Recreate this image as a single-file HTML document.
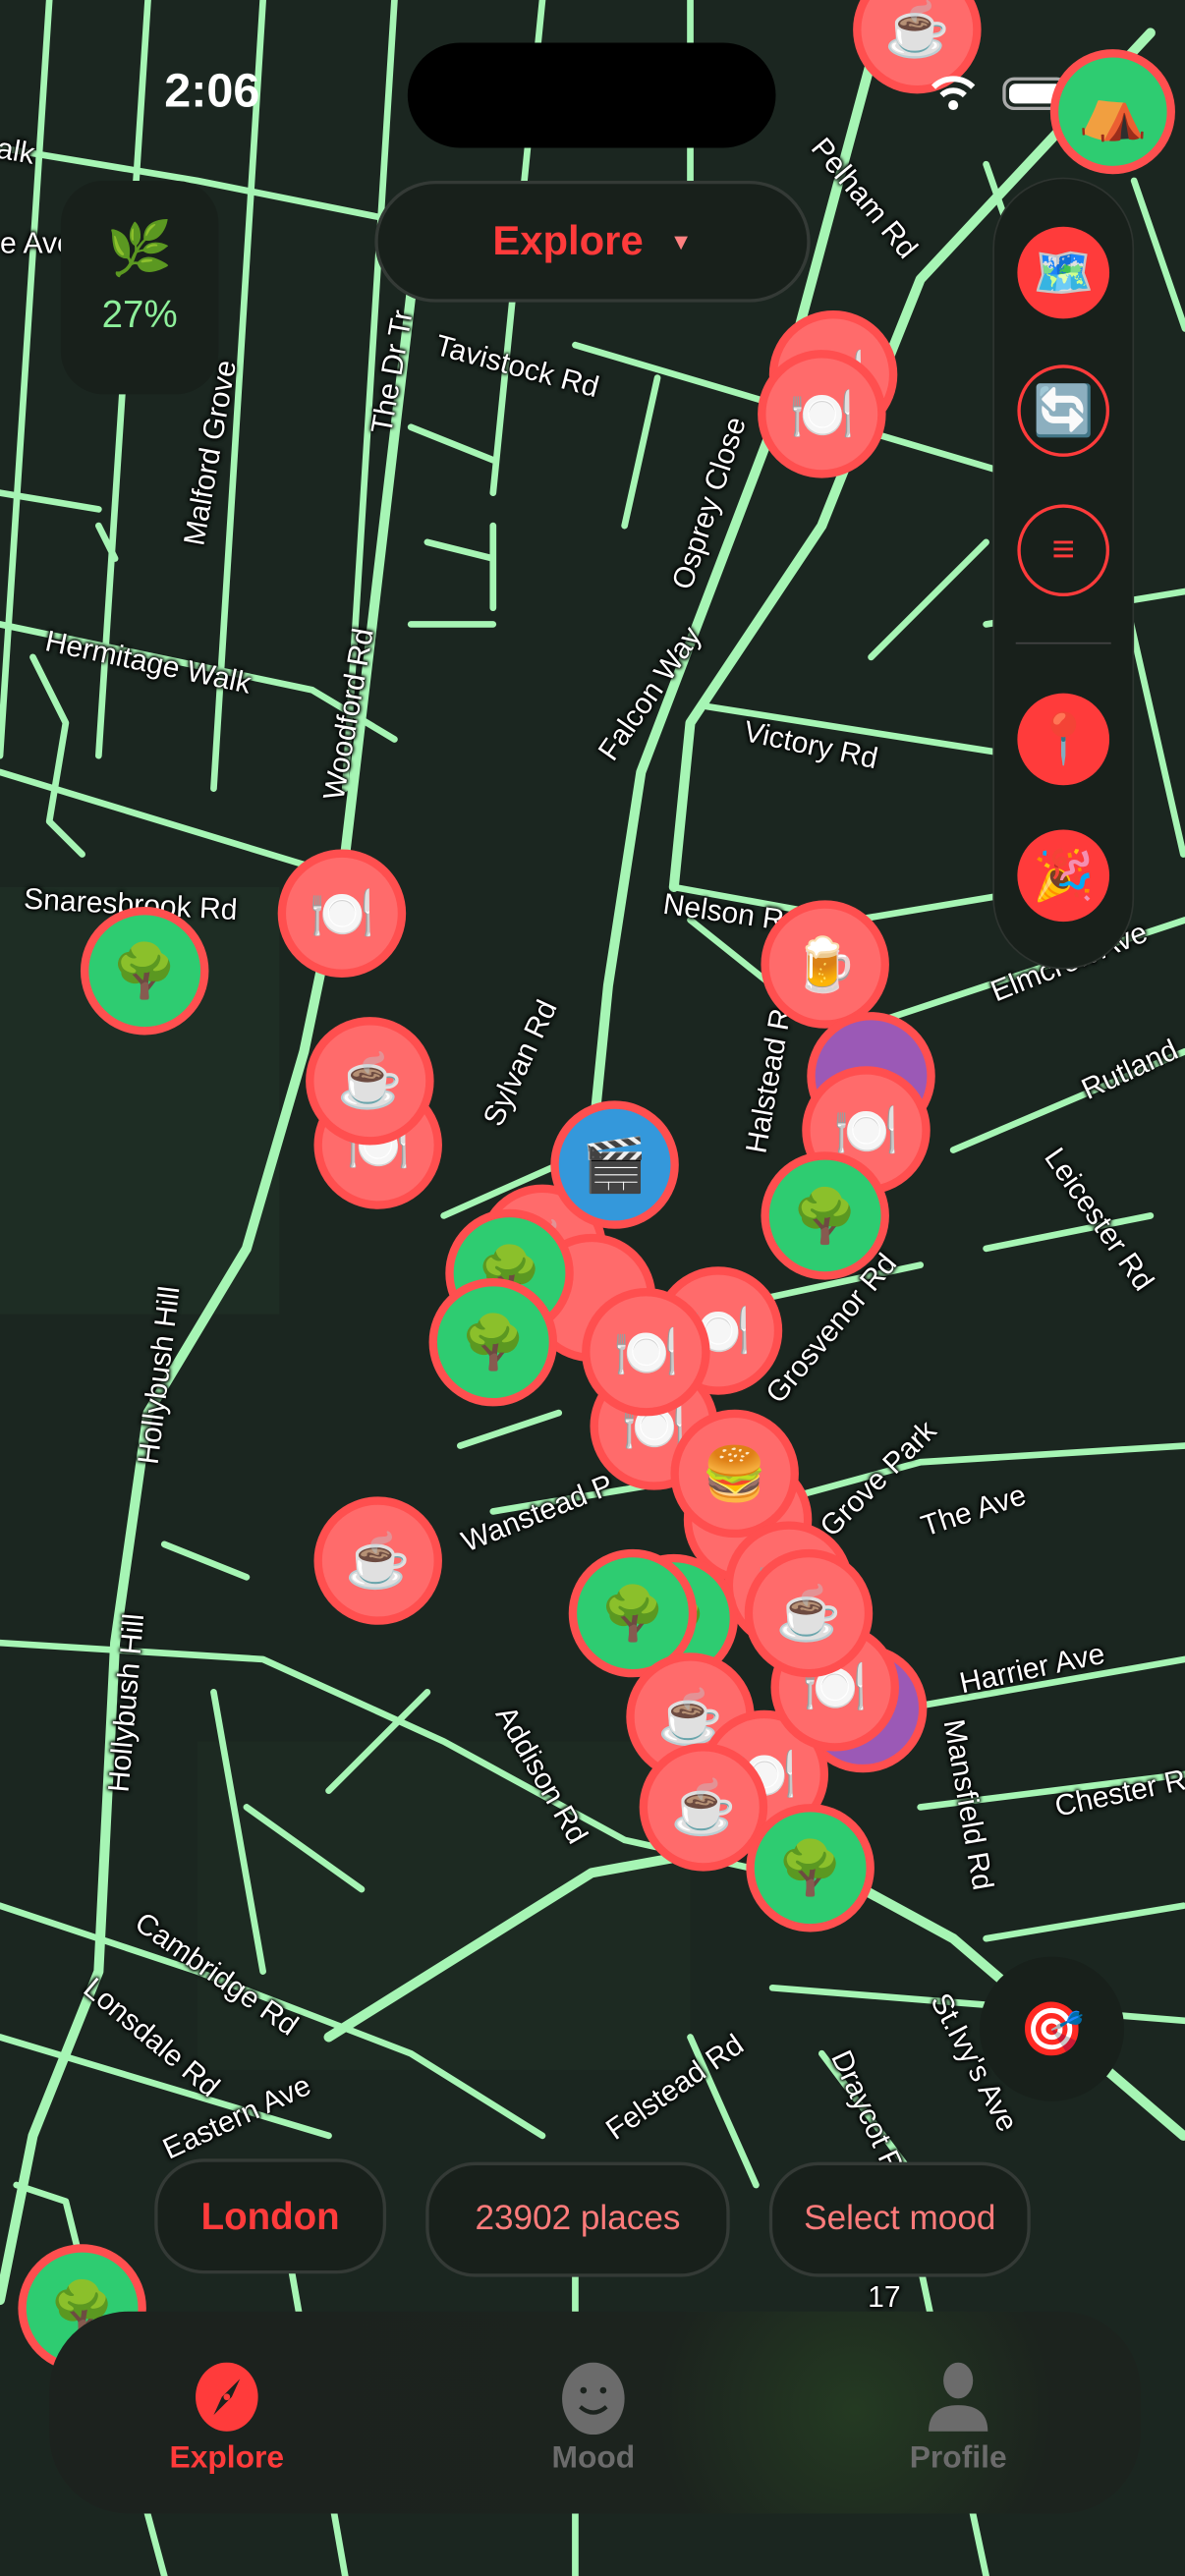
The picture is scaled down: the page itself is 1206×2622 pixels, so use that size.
<!DOCTYPE html>
<html><head><meta charset="utf-8"><style>
html,body{margin:0;padding:0;background:#1b2620;overflow:hidden}
#root{position:absolute;left:0;top:0;width:721px;height:1568px;transform:scale(1.67268,1.67219);transform-origin:0 0;background:#1b2620;font-family:"Liberation Sans","Noto Sans CJK JP",sans-serif;overflow:hidden}
.m{position:absolute;width:68px;height:68px;border-radius:50%;background:#ff6b6b;border:5px solid #ff4f4f;display:flex;align-items:center;justify-content:center;font-size:32px;transform:translate(-39px,-39px);box-sizing:content-box}
.g{background:#2ecc71}.p{background:#9b59b6}.b{background:#3498db}
.lbl{position:absolute;color:#fff;font-size:18px;white-space:nowrap;text-shadow:0 0 3px #000,0 0 3px #000,0 0 2px #000,0 0 2px #000;transform-origin:0 0}
.chip{position:absolute;height:70px;border-radius:30px;background:#18201b;border:2px solid #343a36;display:flex;align-items:center;justify-content:center;font-size:21px;box-sizing:border-box}
.rb{position:absolute;width:56px;height:56px;border-radius:50%;background:#ff3b3b;display:flex;align-items:center;justify-content:center;font-size:30px;left:619px}
</style></head><body><div id="root">
<svg width="721" height="1568" style="position:absolute;left:0;top:0" fill="none" stroke="#a6f5b4" stroke-width="4" stroke-linecap="round" stroke-linejoin="round">
<rect x="0" y="540" width="170" height="260" fill="#1e2d24" stroke="none"/>
<rect x="120" y="1060" width="300" height="200" fill="#1d2a22" stroke="none"/>
<path d="M0 90 L120 110 L320 150 L480 160"/>
<path d="M30 0 L0 460 M90 0 L60 460 M160 0 L130 480 M240 0 L210 480 M330 0 L300 300 M420 0 L420 120"/>
<path d="M350 210 L620 290 M400 230 L380 320 M250 260 L300 280"/>
<path d="M0 380 L190 420 L240 450 M0 470 L230 540"/>
<path d="M540 0 L470 260 L390 470 L370 600 L360 700" stroke-width="6"/>
<path d="M700 20 L560 170 L500 320 L420 440 L410 540" stroke-width="6"/>
<path d="M250 180 L210 520 L185 640 L150 760 L90 860 L70 1000 L60 1200 L20 1300 L0 1400" stroke-width="6"/>
<path d="M520 560 L640 540 M540 620 L721 560 M580 700 L721 640 M600 380 L721 360 M430 430 L620 460 M410 540 L520 560"/>
<path d="M270 740 L360 700 M420 800 L560 770 M600 760 L700 740"/>
<path d="M0 1000 L160 1010 L270 1060 L380 1120 L470 1140 M300 920 L420 900 M450 920 L560 890 L721 880"/>
<path d="M0 1160 L120 1200 L250 1250 L330 1300 M0 1240 L200 1300 M130 1030 L160 1200 M200 1090 L260 1030 M420 1240 L460 1330 M500 1250 L560 1330"/>
<path d="M200 1240 L360 1140 L470 1120 L580 1180 L720 1300" stroke-width="6"/>
<path d="M550 1040 L721 1010 M560 1100 L721 1080 M600 1180 L720 1160 M470 1210 L721 1230"/>
<path d="M10 1330 L40 1340 L60 1420 L100 1568 M170 1340 L210 1568 M350 1380 L350 1568 M560 1380 L600 1568"/>
<path d="M600 100 L670 300 L720 520 M690 110 L721 200 M530 400 L600 330"/>
<path d="M20 400 L40 440 L30 500 L50 520"/>
<path d="M0 300 L60 310 M60 320 L70 340 M250 380 L300 380 M260 330 L300 340 M300 320 L300 370 M420 560 L470 600 M280 880 L340 860 M100 940 L150 960 M150 1100 L220 1150"/>
</svg>
<div class="lbl" style="left:0;top:80px;transform:rotate(10deg)">alk</div>
<div class="lbl" style="left:0;top:138px">e Ave</div>
<div class="lbl" style="left:108px;top:330px;transform:rotate(-80deg)">Malford Grove</div>
<div class="lbl" style="left:222px;top:262px;transform:rotate(-80deg)">The Dr Tr</div>
<div class="lbl" style="left:268px;top:200px;transform:rotate(15deg)">Tavistock Rd</div>
<div class="lbl" style="left:405px;top:355px;transform:rotate(-72deg)">Osprey Close</div>
<div class="lbl" style="left:30px;top:380px;transform:rotate(12deg)">Hermitage Walk</div>
<div class="lbl" style="left:193px;top:485px;transform:rotate(-80deg)">Woodford Rd</div>
<div class="lbl" style="left:360px;top:455px;transform:rotate(-55deg)">Falcon Way</div>
<div class="lbl" style="left:455px;top:435px;transform:rotate(12deg)">Victory Rd</div>
<div class="lbl" style="left:15px;top:537px;transform:rotate(3deg)">Snaresbrook Rd</div>
<div class="lbl" style="left:405px;top:540px;transform:rotate(8deg)">Nelson R</div>
<div class="lbl" style="left:290px;top:680px;transform:rotate(-65deg)">Sylvan Rd</div>
<div class="lbl" style="left:450px;top:700px;transform:rotate(-80deg)">Halstead R</div>
<div class="lbl" style="left:600px;top:595px;transform:rotate(-22deg)">Elmcroft Ave</div>
<div class="lbl" style="left:655px;top:655px;transform:rotate(-25deg)">Rutland</div>
<div class="lbl" style="left:648px;top:695px;transform:rotate(55deg)">Leicester Rd</div>
<div class="lbl" style="left:462px;top:845px;transform:rotate(-50deg)">Grosvenor Rd</div>
<div class="lbl" style="left:80px;top:890px;transform:rotate(-83deg)">Hollybush Hill</div>
<div class="lbl" style="left:278px;top:930px;transform:rotate(-22deg)">Wanstead P</div>
<div class="lbl" style="left:495px;top:925px;transform:rotate(-45deg)">Grove Park</div>
<div class="lbl" style="left:558px;top:920px;transform:rotate(-18deg)">The Ave</div>
<div class="lbl" style="left:62px;top:1090px;transform:rotate(-85deg)">Hollybush Hill</div>
<div class="lbl" style="left:315px;top:1035px;transform:rotate(60deg)">Addison Rd</div>
<div class="lbl" style="left:582px;top:1015px;transform:rotate(-12deg)">Harrier Ave</div>
<div class="lbl" style="left:640px;top:1090px;transform:rotate(-12deg)">Chester R</div>
<div class="lbl" style="left:590px;top:1045px;transform:rotate(80deg)">Mansfield Rd</div>
<div class="lbl" style="left:90px;top:1160px;transform:rotate(35deg)">Cambridge Rd</div>
<div class="lbl" style="left:60px;top:1200px;transform:rotate(40deg)">Lonsdale Rd</div>
<div class="lbl" style="left:96px;top:1300px;transform:rotate(-25deg)">Eastern Ave</div>
<div class="lbl" style="left:365px;top:1290px;transform:rotate(-35deg)">Felstead Rd</div>
<div class="lbl" style="left:520px;top:1245px;transform:rotate(65deg)">Draycot R</div>
<div class="lbl" style="left:580px;top:1210px;transform:rotate(62deg)">St.Ivy's Ave</div>
<div class="lbl" style="left:528px;top:1388px">17</div>
<div class="lbl" style="left:505px;top:80px;transform:rotate(50deg)">Pelham Rd</div>
<!-- markers -->
<div class="m" style="left:558px;top:18px">☕</div>
<div class="m" style="left:507px;top:228px">🍽️</div>
<div class="m" style="left:500px;top:252px">🍽️</div>
<div class="m g" style="left:88px;top:591px">🌳</div>
<div class="m" style="left:208px;top:556px">🍽️</div>
<div class="m" style="left:230px;top:697px">🍽️</div>
<div class="m" style="left:225px;top:658px">☕</div>
<div class="m" style="left:502px;top:587px">🍺</div>
<div class="m p" style="left:530px;top:655px"></div>
<div class="m" style="left:527px;top:688px">🍽️</div>
<div class="m g" style="left:502px;top:740px">🌳</div>
<div class="m" style="left:330px;top:760px">☕</div>
<div class="m" style="left:360px;top:790px"></div>
<div class="m b" style="left:374px;top:709px">🎬</div>
<div class="m g" style="left:310px;top:775px">🌳</div>
<div class="m g" style="left:300px;top:817px">🌳</div>
<div class="m" style="left:437px;top:810px">🍽️</div>
<div class="m" style="left:398px;top:868px">🍽️</div>
<div class="m" style="left:393px;top:823px">🍽️</div>
<div class="m" style="left:455px;top:925px"></div>
<div class="m" style="left:447px;top:897px">🍔</div>
<div class="m" style="left:230px;top:950px">☕</div>
<div class="m" style="left:480px;top:965px">🍽️</div>
<div class="m p" style="left:525px;top:1040px"></div>
<div class="m g" style="left:410px;top:985px">🌳</div>
<div class="m g" style="left:385px;top:982px">🌳</div>
<div class="m" style="left:420px;top:1045px">☕</div>
<div class="m" style="left:465px;top:1080px">🍽️</div>
<div class="m" style="left:508px;top:1027px">🍽️</div>
<div class="m" style="left:492px;top:982px">☕</div>
<div class="m" style="left:428px;top:1100px">☕</div>
<div class="m g" style="left:493px;top:1137px">🌳</div>
<div class="m g" style="left:50px;top:1405px">🌳</div>
<!-- status bar -->
<div style="position:absolute;left:100px;top:40px;color:#fff;font-size:29px;font-weight:600">2:06</div>
<div style="position:absolute;left:248px;top:26px;width:224px;height:64px;border-radius:32px;background:#000"></div>
<svg style="position:absolute;left:565px;top:44px" width="30" height="26" viewBox="0 0 30 26"><path d="M3 9 A17 17 0 0 1 27 9" stroke="#fff" stroke-width="3.5" fill="none"/><path d="M8 14 A10 10 0 0 1 22 14" stroke="#fff" stroke-width="3.5" fill="none"/><circle cx="15" cy="20" r="3" fill="#fff"/></svg>
<div style="position:absolute;left:610px;top:47px;width:40px;height:20px;border-radius:7px;border:2px solid #aaa;box-sizing:border-box;padding:2px"><div style="width:100%;height:100%;background:#fff;border-radius:4px"></div></div>
<div class="m g" style="left:677px;top:68px;width:66px;height:66px;font-size:34px;transform:translate(-38px,-38px)">⛺</div>
<!-- left badge -->
<div style="position:absolute;left:37px;top:110px;width:96px;height:130px;border-radius:26px;background:#18201b;text-align:center">
<div style="font-size:32px;margin-top:22px">🌿</div>
<div style="color:#8ef09b;font-size:23px;margin-top:8px">27%</div></div>
<!-- explore pill -->
<div style="position:absolute;left:228px;top:110px;width:265px;height:74px;border-radius:37px;background:#18201b;border:2px solid #343a36;box-sizing:border-box;display:flex;align-items:center;justify-content:center;color:#ff3b3b;font-size:25px;font-weight:600">Explore<span style="font-size:14px;color:#ff8080;margin-left:16px">▼</span></div>
<!-- right panel -->
<div style="position:absolute;left:604px;top:108px;width:86px;height:482px;border-radius:43px;background:#18201b;border:1px solid #2e3430;box-sizing:border-box"></div>
<div class="rb" style="top:138px">🗺️</div>
<div class="rb" style="top:222px;background:#18201b;border:2px solid #ff3b3b;box-sizing:border-box">🔄</div>
<div class="rb" style="top:307px;background:#18201b;border:2px solid #ff3b3b;box-sizing:border-box;color:#ff3b3b;font-size:24px">≡</div>
<div style="position:absolute;left:618px;top:391px;width:58px;height:1px;background:#444"></div>
<div class="rb" style="top:422px">📍</div>
<div class="rb" style="top:505px">🎉</div>
<!-- target -->
<div style="position:absolute;left:596px;top:1191px;width:88px;height:88px;border-radius:50%;background:#18201b;display:flex;align-items:center;justify-content:center;font-size:32px">🎯</div>
<!-- chips -->
<div class="chip" style="left:94px;top:1314px;width:141px;color:#ff3b3b;font-size:23px;font-weight:600">London</div>
<div class="chip" style="left:259px;top:1316px;width:185px;color:#ff7b7b">23902 places</div>
<div class="chip" style="left:468px;top:1316px;width:159px;color:#ff7b7b">Select mood</div>
<!-- tab bar -->
<div style="position:absolute;left:30px;top:1407px;width:664px;height:123px;border-radius:48px;background:radial-gradient(circle at 490px 60px,#243a22 0,#1c231e 120px,#1c221e 100%)"></div>
<svg style="position:absolute;left:118px;top:1438px" width="40" height="42" viewBox="0 0 40 42"><ellipse cx="20" cy="21" rx="19" ry="21" fill="#ff3b3b"/><path d="M28 10 L17 21 L12 32 L23 21 Z" fill="#1c231e"/><circle cx="20" cy="21" r="2" fill="#ff3b3b"/></svg>
<div style="position:absolute;left:88px;top:1486px;width:100px;text-align:center;color:#ff3b3b;font-size:19px;font-weight:600">Explore</div>
<svg style="position:absolute;left:341px;top:1438px" width="40" height="44" viewBox="0 0 40 44"><ellipse cx="20" cy="22" rx="19" ry="22" fill="#6b6b6b"/><circle cx="14" cy="17" r="2" fill="#1c231e"/><circle cx="26" cy="17" r="2" fill="#1c231e"/><path d="M12 27 Q20 34 28 27" stroke="#1c231e" stroke-width="2.5" fill="none"/></svg>
<div style="position:absolute;left:311px;top:1486px;width:100px;text-align:center;color:#6b6b6b;font-size:19px;font-weight:600">Mood</div>
<svg style="position:absolute;left:563px;top:1438px" width="40" height="42" viewBox="0 0 40 42"><ellipse cx="20" cy="11" rx="9" ry="11" fill="#6b6b6b"/><path d="M2 42 Q2 26 20 26 Q38 26 38 42 Z" fill="#6b6b6b"/></svg>
<div style="position:absolute;left:533px;top:1486px;width:100px;text-align:center;color:#6b6b6b;font-size:19px;font-weight:600">Profile</div>
</div></body></html>
